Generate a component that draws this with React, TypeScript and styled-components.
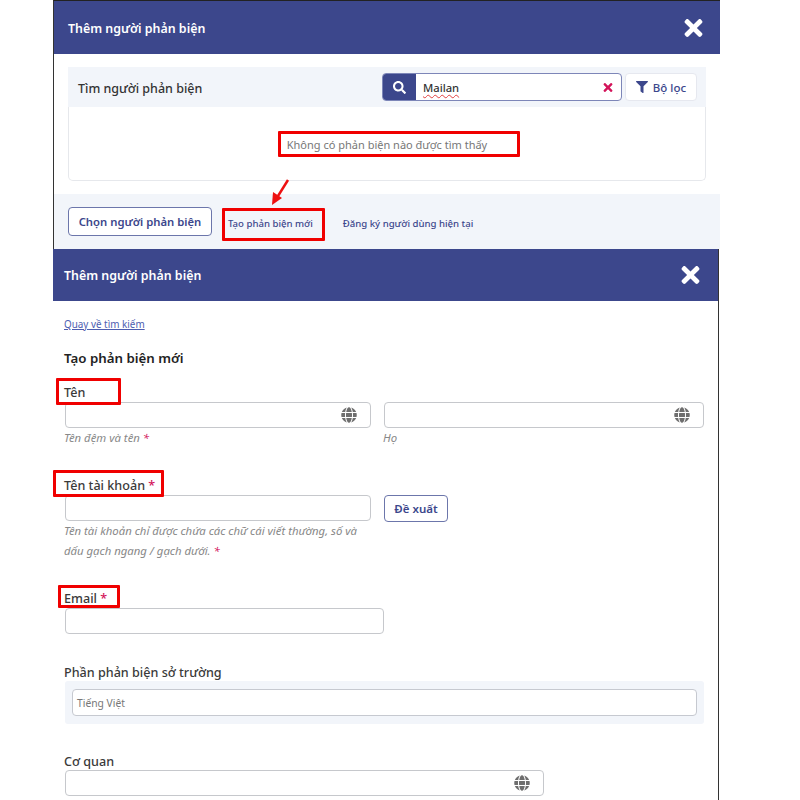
import React from 'react';
import styled, { createGlobalStyle } from 'styled-components';
import { FaFilter, FaGlobe, FaSearch, FaTimes } from 'react-icons/fa';

const GlobalStyle = createGlobalStyle`
    html, body { margin: 0; padding: 0; background: #fff; }
    body { font-family: "Noto Sans", "Liberation Sans", sans-serif; color: #333; }
    * { box-sizing: border-box; }
`;

const Page = styled.div`
    width: 800px;
    height: 800px;
    overflow: hidden;
    padding-left: 53px;
    position: relative;
`;

const TopModal = styled.section`
    width: 667px;
    height: 249px;
    border-top: 1px solid #222;
    border-left: 1px solid #333;
    display: flex;
    flex-direction: column;
`;

const BottomModal = styled.section`
    width: 666px;
    height: 551px;
    border-right: 1px solid #333;
`;

const Header = styled.header<{ $h: number; $left: number; $right: number }>`
    height: ${p => p.$h}px;
    flex: none;
    background: #3c478c;
    display: flex;
    align-items: center;
    justify-content: space-between;
    padding: 0 ${p => p.$right}px 0 ${p => p.$left}px;
    color: #fff;
    svg { width: 21px; height: 26px; }
`;

const HeaderTitle = styled.span<{ $pt?: number }>`
    padding-top: ${p => p.$pt ?? 0}px;
    font-size: 12.4px;
    font-weight: 600;
`;

const TopBody = styled.div`
    height: 140px;
    flex: none;
    padding: 13px 14px 0 14px;
`;

const Card = styled.div`
    height: 114px;
    border: 1px solid #e6e8ec;
    border-top: 0;
    border-radius: 0 0 5px 5px;
    display: flex;
    flex-direction: column;
`;

const CardBar = styled.div`
    height: 40px;
    flex: none;
    margin: 0 -1px;
    padding: 0 9px 0 10px;
    background: #f2f5fa;
    display: flex;
    align-items: center;
    font-size: 12.5px;
    font-weight: 500;
`;

const CardTitle = styled.span`
    flex: 1;
    padding-top: 2px;
`;

const SearchGroup = styled.div`
    width: 240px;
    height: 28px;
    display: flex;
    border: 1px solid #7d86b8;
    border-radius: 4px;
    background: #fff;
    overflow: hidden;
`;

const SearchAddon = styled.span`
    width: 33px;
    background: #3c478c;
    color: #fff;
    display: flex;
    align-items: center;
    justify-content: center;
    svg { width: 13px; height: 13px; }
`;

const SearchValue = styled.span`
    flex: 1;
    padding: 1px 0 0 7px;
    line-height: 26px;
    font-size: 11.2px;
    span {
        text-decoration: underline wavy #e0403f 1px;
        text-underline-offset: 2px;
    }
`;

const ClearMark = styled.span`
    width: 18px;
    color: #d3145a;
    display: flex;
    align-items: center;
    svg { width: 10px; height: 13px; }
`;

const FilterButton = styled.button`
    width: 72px;
    height: 28px;
    margin-left: 3px;
    border: 1px solid #e6e8ef;
    border-radius: 4px;
    background: #fff;
    color: #3c478c;
    font: 500 11.5px "Noto Sans", sans-serif;
    display: flex;
    align-items: center;
    justify-content: center;
    gap: 5px;
    padding: 0;
    svg { width: 12px; height: 12px; }
`;

const EmptyArea = styled.div`
    flex: 1;
    display: flex;
    align-items: center;
    justify-content: center;
    padding-top: 2px;
    font-size: 11px;
    line-height: 15px;
    color: #777;
`;

const Highlight = styled.span`
    position: relative;
    display: inline-block;
`;

const RedFrame = styled.span<{ $t: number; $r: number; $b: number; $l: number }>`
    position: absolute;
    top: ${p => p.$t}px;
    right: ${p => p.$r}px;
    bottom: ${p => p.$b}px;
    left: ${p => p.$l}px;
    border: 3px solid #f00000;
    border-radius: 1px;
    pointer-events: none;
`;

const Footer = styled.footer`
    flex: 1;
    background: #f2f5fa;
    display: flex;
    align-items: center;
    padding: 0 0 0 14px;
    position: relative;
`;

const OutlineButton = styled.button<{ $w: number; $h: number; $fs: number; $ml?: number }>`
    width: ${p => p.$w}px;
    height: ${p => p.$h}px;
    margin-left: ${p => p.$ml ?? 0}px;
    flex: none;
    padding: 0;
    background: #fff;
    border: 1px solid #6c76ab;
    border-radius: 4px;
    color: #3c478c;
    font: 600 ${p => p.$fs}px "Noto Sans", sans-serif;
`;

const FooterLink = styled.span<{ $ml: number }>`
    margin: 4px 0 0 ${p => p.$ml}px;
    font-size: 9.6px;
    line-height: 14px;
    font-weight: 500;
    color: #3c478c;
    white-space: nowrap;
`;

const Arrow = styled.svg`
    position: absolute;
    left: 216px;
    top: -15px;
    width: 20px;
    height: 30px;
`;

const Form = styled.div`
    padding: 0 14px 0 11px;
`;

const BackLink = styled.a`
    display: block;
    margin-top: 16px;
    font-size: 9.9px;
    line-height: 14px;
    color: #4d5db0;
    text-decoration: underline;
`;

const FormTitle = styled.h2`
    margin: 18px 0 0;
    font-size: 13.3px;
    line-height: 18px;
    font-weight: 600;
    color: #222;
`;

const Label = styled.div<{ $mt: number }>`
    height: 18px;
    margin-top: ${p => p.$mt}px;
    padding-top: 1px;
    font-size: 12.6px;
    line-height: 18px;
    font-weight: 500;
    color: #3a3a3a;
`;

const Star = styled.span`
    color: #d3145a;
`;

const Row = styled.div<{ $mt?: number }>`
    display: flex;
    gap: 13px;
    margin-top: ${p => p.$mt ?? 0}px;
`;

const Column = styled.div<{ $w: number }>`
    width: ${p => p.$w}px;
    flex: none;
`;

const Field = styled.div<{ $w: number; $mt?: number }>`
    width: ${p => p.$w}px;
    height: 26px;
    margin: ${p => p.$mt ?? 0}px 0 0 1px;
    border: 1px solid #c6c8cc;
    border-radius: 4px;
    background: #fff;
    display: flex;
    align-items: center;
    justify-content: flex-end;
    padding-right: 13px;
    color: #6e6e6e;
    svg { width: 16px; height: 16px; }
`;

const Hint = styled.div`
    font-size: 11.35px;
    line-height: 20px;
    font-style: italic;
    color: #888;
`;

const LocaleBox = styled.div`
    width: 639px;
    height: 43px;
    margin-left: 1px;
    padding: 8px 7px;
    background: #f2f5fa;
    border-radius: 3px;
`;

const LocaleInput = styled.div`
    height: 27px;
    border: 1px solid #c6c9d0;
    border-radius: 4px;
    background: #fff;
    padding: 1px 0 0 4px;
    font-size: 10.3px;
    line-height: 25px;
    color: #777;
`;

export default function App() {
    return (
        <Page>
            <GlobalStyle />
            <TopModal>
                <Header $h={53} $left={14} $right={16}>
                    <HeaderTitle $pt={2}>Thêm người phản biện</HeaderTitle>
                    <FaTimes />
                </Header>
                <TopBody>
                    <Card>
                        <CardBar>
                            <CardTitle>Tìm người phản biện</CardTitle>
                            <SearchGroup>
                                <SearchAddon><FaSearch /></SearchAddon>
                                <SearchValue><span>Mailan</span></SearchValue>
                                <ClearMark><FaTimes /></ClearMark>
                            </SearchGroup>
                            <FilterButton><FaFilter />Bộ lọc</FilterButton>
                        </CardBar>
                        <EmptyArea>
                            <Highlight>
                                Không có phản biện nào được tìm thấy
                                <RedFrame $t={-6} $r={-33} $b={-5} $l={-9} />
                            </Highlight>
                        </EmptyArea>
                    </Card>
                </TopBody>
                <Footer>
                    <Arrow viewBox="0 0 20 30">
                        <path d="M18 1 L8 17" stroke="#ee1111" strokeWidth="2.5" fill="none" />
                        <path d="M2 26 L3 13 L12 19 Z" fill="#ee1111" />
                    </Arrow>
                    <OutlineButton $w={144} $h={29} $fs={11.3}>Chọn người phản biện</OutlineButton>
                    <FooterLink $ml={16}>
                        <Highlight>
                            Tạo phản biện mới
                            <RedFrame $t={-9} $r={-12} $b={-10} $l={-6} />
                        </Highlight>
                    </FooterLink>
                    <FooterLink $ml={30}>Đăng ký người dùng hiện tại</FooterLink>
                </Footer>
            </TopModal>
            <BottomModal>
                <Header $h={52} $left={11} $right={17}>
                    <HeaderTitle>Thêm người phản biện</HeaderTitle>
                    <FaTimes />
                </Header>
                <Form>
                    <BackLink>Quay về tìm kiếm</BackLink>
                    <FormTitle>Tạo phản biện mới</FormTitle>
                    <Label $mt={16}>
                        <Highlight>
                            Tên
                            <RedFrame $t={-6} $r={-36} $b={-3} $l={-8} />
                        </Highlight>
                    </Label>
                    <Row $mt={1}>
                        <Column $w={306}>
                            <Field $w={306}><FaGlobe /></Field>
                            <Hint>Tên đệm và tên <Star>*</Star></Hint>
                        </Column>
                        <Column $w={320}>
                            <Field $w={320}><FaGlobe /></Field>
                            <Hint>Họ</Hint>
                        </Column>
                    </Row>
                    <Label $mt={28}>
                        <Highlight>
                            Tên tài khoản <Star>*</Star>
                            <RedFrame $t={-7} $r={-9} $b={-2} $l={-11} />
                        </Highlight>
                    </Label>
                    <Row $mt={1}>
                        <Column $w={306}>
                            <Field $w={306} />
                            <Hint>
                                Tên tài khoản chỉ được chứa các chữ cái viết thường, số và dấu gạch ngang / gạch dưới. <Star>*</Star>
                            </Hint>
                        </Column>
                        <OutlineButton $w={64} $h={27} $fs={11.5} $ml={1}>Đề xuất</OutlineButton>
                    </Row>
                    <Label $mt={28}>
                        <Highlight>
                            Email <Star>*</Star>
                            <RedFrame $t={-5} $r={-13} $b={0} $l={-6} />
                        </Highlight>
                    </Label>
                    <Field $w={319} $mt={1} />
                    <Label $mt={29}>Phần phản biện sở trường</Label>
                    <LocaleBox>
                        <LocaleInput>Tiếng Việt</LocaleInput>
                    </LocaleBox>
                    <Label $mt={28}>Cơ quan</Label>
                    <Field $w={479}><FaGlobe /></Field>
                </Form>
            </BottomModal>
        </Page>
    );
}
